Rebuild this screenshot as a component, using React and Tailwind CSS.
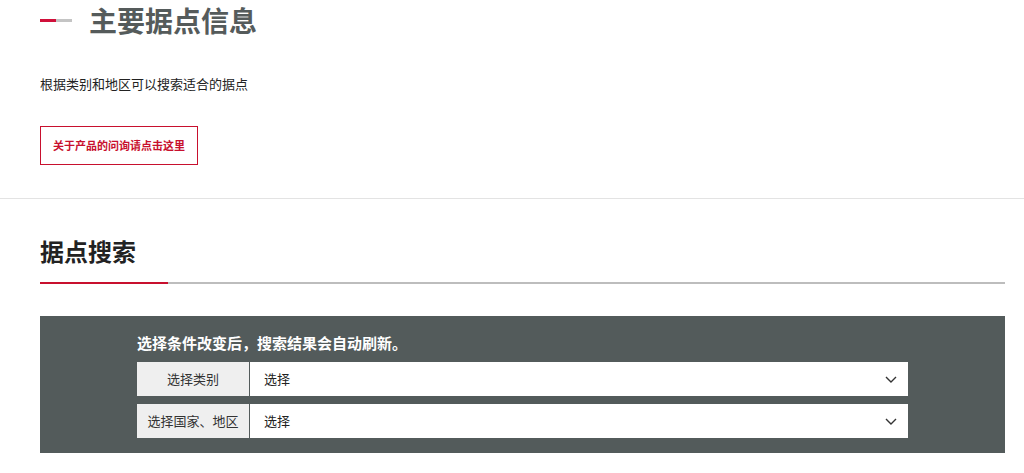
import React from "react";

function Chevron() {
  return (
    <svg width="12" height="7" viewBox="0 0 12 7" fill="none">
      <path d="M1 1L6 6L11 1" stroke="#333" strokeWidth="1.4" />
    </svg>
  );
}

function Row({ label }) {
  return (
    <div className="flex h-[34px]">
      <div className="w-[112px] bg-[#efefef] flex items-center justify-center text-[13px] text-[#333]">
        {label}
      </div>
      <div className="flex-1 bg-white ml-px flex items-center justify-between pl-[14px] pr-[11px] text-[13px] text-[#222]">
        <span>选择</span>
        <Chevron />
      </div>
    </div>
  );
}

export default function App() {
  return (
    <div className="w-[1024px] h-[473px] bg-white overflow-hidden font-['Noto_Sans_CJK_SC',sans-serif]">
      <div className="pl-[40px]">
        <div className="flex items-center h-[40px]">
          <div className="flex">
            <div className="w-[16px] h-[3px] bg-[#d0103a]" />
            <div className="w-[16px] h-[3px] bg-[#c4c4c4]" />
          </div>
          <h1 className="ml-[17px] text-[28px] font-bold text-[#555b5b] leading-[40px]">主要据点信息</h1>
        </div>
        <p className="mt-[34px] text-[13px] leading-[20px] text-[#222]">根据类别和地区可以搜索适合的据点</p>
        <div className="mt-[32px] inline-flex items-center h-[39px] px-[12px] border border-[#c8102e] text-[#c8102e] text-[11px] font-bold">
          关于产品的问询请点击这里
        </div>
      </div>
      <div className="mt-[33px] h-px bg-[#e3e3e3]" />
      <div className="ml-[40px] w-[965px]">
        <h2 className="mt-[36px] text-[24px] font-bold leading-[32px] text-[#222]">据点搜索</h2>
        <div className="mt-[15px] flex items-end">
          <div className="w-[128px] h-[2px] bg-[#c8102e]" />
          <div className="flex-1 h-[2px] bg-[#bdbdbd]" />
        </div>
        <div className="mt-[32px] bg-[#535b5b] h-[137px] pt-[16px]">
          <div className="w-[771px] mx-auto">
            <p className="text-[15px] font-bold text-white leading-[22px] mb-[8px]">选择条件改变后，搜索结果会自动刷新。</p>
            <div className="flex flex-col gap-[8px]">
              <Row label="选择类别" />
              <Row label="选择国家、地区" />
            </div>
          </div>
        </div>
      </div>
    </div>
  );
}
